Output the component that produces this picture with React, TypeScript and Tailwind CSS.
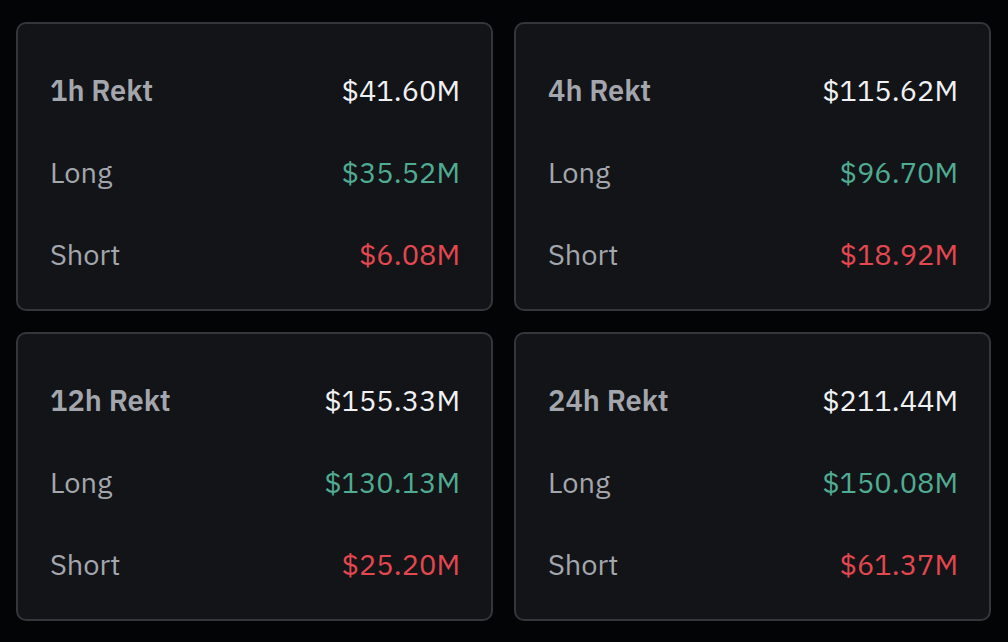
const cards = [
  { label: '1h Rekt', total: '$41.60M', long: '$35.52M', short: '$6.08M' },
  { label: '4h Rekt', total: '$115.62M', long: '$96.70M', short: '$18.92M' },
  { label: '12h Rekt', total: '$155.33M', long: '$130.13M', short: '$25.20M' },
  { label: '24h Rekt', total: '$211.44M', long: '$150.08M', short: '$61.37M' },
];

function RektCard({ label, total, long, short }: (typeof cards)[number]) {
  return (
    <div className="rounded-[10px] border-2 border-[#34363b] bg-[#131418] pl-[32px] pr-[31px] pt-[25px] pb-[14px]">
      <div className="flex h-[82px] items-center justify-between">
        <span className="font-semibold text-[#a3a7ad]">{label}</span>
        <span className="text-[#f0f1f3]">{total}</span>
      </div>
      <div className="flex h-[82px] items-center justify-between">
        <span className="text-[#a3a7ad]">Long</span>
        <span className="text-[#4fab91]">{long}</span>
      </div>
      <div className="flex h-[82px] items-center justify-between">
        <span className="text-[#a3a7ad]">Short</span>
        <span className="text-[#e3474f]">{short}</span>
      </div>
    </div>
  );
}

export default function App() {
  return (
    <div
      className="min-h-screen bg-[#030405] pl-4 pr-[17px] pt-[22px] pb-[22px] text-[29px] leading-none"
      style={{ fontFamily: "'IBM Plex Sans', Inter, 'Noto Sans', sans-serif" }}
    >
      <div className="grid grid-cols-2 gap-[21px]">
        {cards.map((c) => (
          <RektCard key={c.label} {...c} />
        ))}
      </div>
    </div>
  );
}
